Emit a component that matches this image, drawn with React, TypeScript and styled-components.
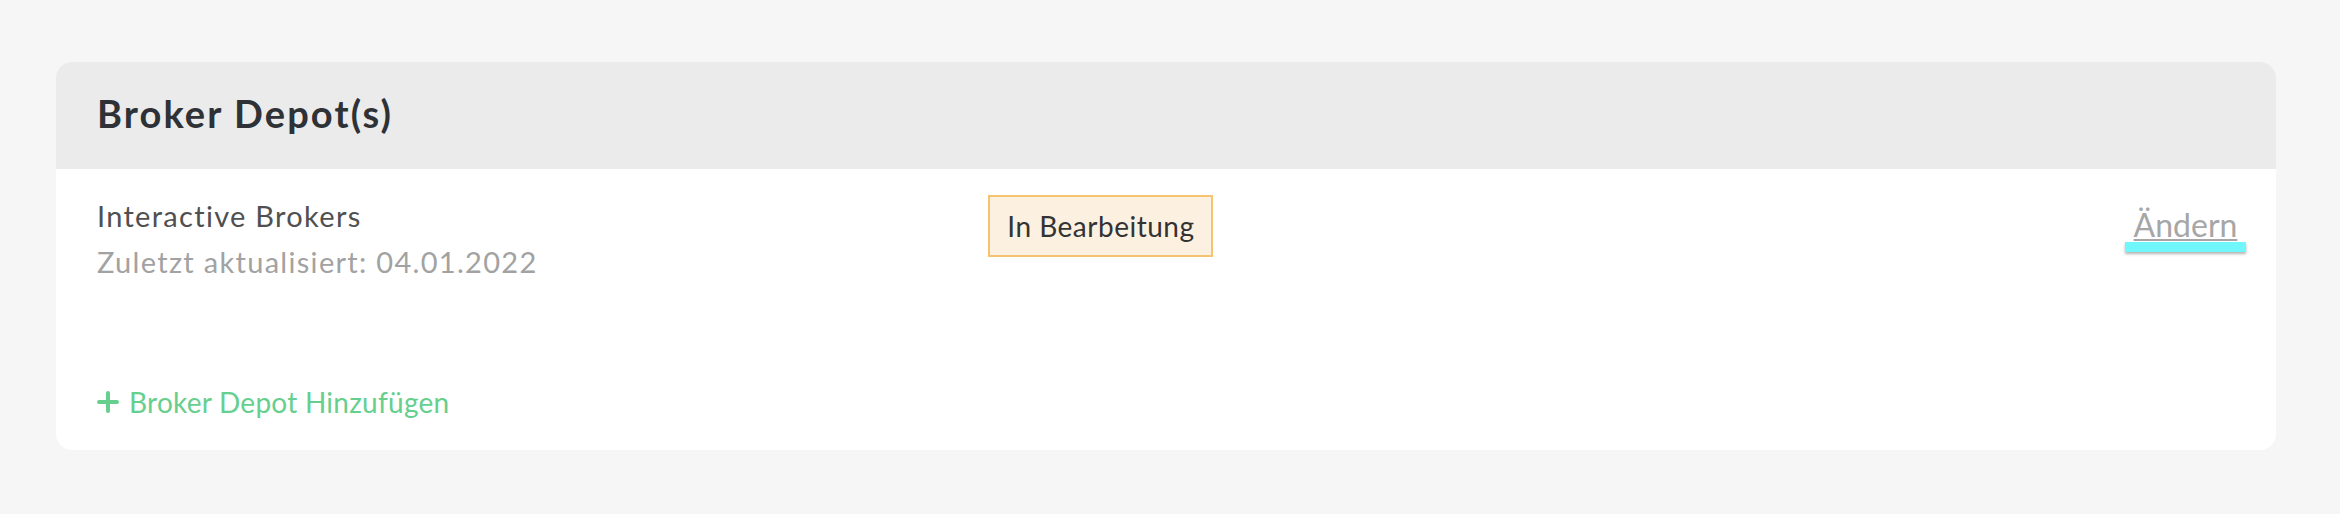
import React, { FC } from 'react'
import styled, { createGlobalStyle } from 'styled-components'

const GlobalStyle = createGlobalStyle`
  html, body {
    margin: 0;
    padding: 0;
    background: #f6f6f6;
    font-family: Lato, 'Liberation Sans', sans-serif;
    -webkit-font-smoothing: antialiased;
  }
`

const Page = styled.div`
  min-height: 514px;
  box-sizing: border-box;
  padding: 62px 64px 0 56px;
`

const Card = styled.section`
  background: #ffffff;
  border-radius: 16px;
  overflow: hidden;
`

const CardHeader = styled.header`
  height: 107px;
  box-sizing: border-box;
  display: flex;
  align-items: center;
  padding: 0 41px 6px;
  background: #ebebeb;
`

const Title = styled.h2`
  margin: 0;
  font-size: 38px;
  font-weight: 700;
  letter-spacing: 2.1px;
  color: #2e3135;
`

const CardBody = styled.div`
  padding: 24px 40px 25px 41px;
`

const DepotRow = styled.div`
  display: grid;
  grid-template-columns: 5fr 5fr 2fr;
  align-items: start;
`

const Info = styled.div`
  display: flex;
  flex-direction: column;
`

const Line = styled.span<{ muted?: boolean }>`
  font-size: 29px;
  line-height: 46px;
  letter-spacing: 1.3px;
  color: ${({ muted }) => (muted ? '#a2a2a2' : '#505050')};
`

const StatusBadge = styled.span`
  justify-self: start;
  margin-top: 2px;
  padding: 12px 17px;
  border: 2px solid #f6c370;
  background: #fcf1e1;
  font-size: 28px;
  line-height: 34px;
  letter-spacing: 0.5px;
  color: #333333;
`

const EditLink = styled.a`
  justify-self: end;
  margin-top: 15px;
  margin-right: -10px;
  display: flex;
  flex-direction: column;
  align-items: center;
  font-size: 32px;
  line-height: 34px;
  color: #a6a6a6;
  text-decoration: underline;
  text-decoration-thickness: 2px;
  text-underline-offset: 2px;
  cursor: pointer;

  &::after {
    content: '';
    display: block;
    width: 121px;
    height: 10px;
    background: #6ff7fb;
    box-shadow: 0 2px 3px rgba(0, 0, 0, 0.3);
  }
`

const AddLink = styled.a`
  display: flex;
  align-items: center;
  gap: 10px;
  margin-top: 94px;
  font-size: 28px;
  line-height: 46px;
  letter-spacing: 0.25px;
  color: #66cf8e;
  cursor: pointer;
`

const PlusIcon: FC = () => (
  <svg width='22' height='22' viewBox='0 0 22 22' aria-hidden='true'>
    <path d='M11 2v18M2 11h18' stroke='#66cf8e' strokeWidth='4' strokeLinecap='round' />
  </svg>
)

const depots = [
  { name: 'Interactive Brokers', updated: '04.01.2022', status: 'In Bearbeitung' },
]

const App: FC = () => (
  <>
    <GlobalStyle />
    <Page>
      <Card>
        <CardHeader>
          <Title>Broker Depot(s)</Title>
        </CardHeader>
        <CardBody>
          {depots.map((depot) => (
            <DepotRow key={depot.name}>
              <Info>
                <Line>{depot.name}</Line>
                <Line muted>Zuletzt aktualisiert: {depot.updated}</Line>
              </Info>
              <StatusBadge>{depot.status}</StatusBadge>
              <EditLink>Ändern</EditLink>
            </DepotRow>
          ))}
          <AddLink>
            <PlusIcon />
            Broker Depot Hinzufügen
          </AddLink>
        </CardBody>
      </Card>
    </Page>
  </>
)

export default App
